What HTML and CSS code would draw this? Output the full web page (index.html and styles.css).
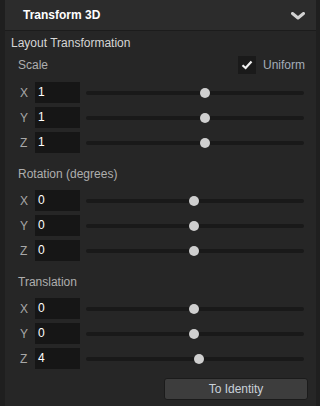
FILE: index.html
```html
<!DOCTYPE html>
<html lang="en">
<head>
  <meta charset="UTF-8" />
  <title>Transform 3D</title>
  <link rel="stylesheet" href="styles.css">
</head>
<body>
  <div class="panel">
    <div class="panel-header">
      <span class="panel-title">Transform 3D</span>
      <svg class="chevron" width="14" height="8" viewBox="0 0 14 8">
        <polyline points="1.5,1.5 7,6 12.5,1.5" fill="none" stroke="#d2d2d2" stroke-width="3" stroke-linejoin="round" stroke-linecap="round"/>
      </svg>
    </div>

    <div class="panel-body">
      <div class="group-title">Layout Transformation</div>

      <div class="section-head scale-head">
        <span class="section-title">Scale</span>
        <label class="check">
          <span class="check-box">
            <svg width="12" height="10" viewBox="0 0 12 10">
              <polyline points="1.5,5.2 4.6,8 10.5,1.5" fill="none" stroke="#f0f0f0" stroke-width="2.2"/>
            </svg>
          </span>
          Uniform
        </label>
      </div>
      <div class="rows">
        <div class="row"><span class="axis">X</span><div class="field">1</div><div class="slider"><div class="knob" style="left: 54.6%"></div></div></div>
        <div class="row"><span class="axis">Y</span><div class="field">1</div><div class="slider"><div class="knob" style="left: 54.6%"></div></div></div>
        <div class="row"><span class="axis">Z</span><div class="field">1</div><div class="slider"><div class="knob" style="left: 54.6%"></div></div></div>
      </div>

      <div class="section-head">
        <span class="section-title">Rotation (degrees)</span>
      </div>
      <div class="rows">
        <div class="row"><span class="axis">X</span><div class="field">0</div><div class="slider"><div class="knob" style="left: 49.5%"></div></div></div>
        <div class="row"><span class="axis">Y</span><div class="field">0</div><div class="slider"><div class="knob" style="left: 49.5%"></div></div></div>
        <div class="row"><span class="axis">Z</span><div class="field">0</div><div class="slider"><div class="knob" style="left: 49.5%"></div></div></div>
      </div>

      <div class="section-head">
        <span class="section-title">Translation</span>
      </div>
      <div class="rows">
        <div class="row"><span class="axis">X</span><div class="field">0</div><div class="slider"><div class="knob" style="left: 49.5%"></div></div></div>
        <div class="row"><span class="axis">Y</span><div class="field">0</div><div class="slider"><div class="knob" style="left: 49.5%"></div></div></div>
        <div class="row"><span class="axis">Z</span><div class="field">4</div><div class="slider"><div class="knob" style="left: 51.8%"></div></div></div>
      </div>

      <div class="actions">
        <button class="btn">To Identity</button>
      </div>
    </div>
  </div>
</body>
</html>
```

FILE: styles.css
```css
body {
  margin: 0;
  background-color: #1f1f1f;
  font-family: "Liberation Sans", Arial, sans-serif;
  font-size: 12px;
  color: #d4d4d4;
}

.panel {
  width: 311px;
  height: 406px;
  margin-left: 5px;
  background-color: #262626;
}

.panel-header {
  display: flex;
  align-items: center;
  justify-content: space-between;
  height: 30px;
  padding: 0 11px 0 18px;
  background-color: #2c2c2c;
  border-bottom: 1px solid #1c1c1c;
}

.panel-title {
  font-weight: bold;
  color: #ffffff;
  font-size: 12px;
}

.chevron {
  margin-top: 1px;
}

.panel-body {
  padding: 2px 8px 0 6px;
}

.group-title {
  height: 20px;
  line-height: 20px;
  color: #d6d6d6;
}

.section-head {
  display: flex;
  align-items: center;
  justify-content: space-between;
  height: 20px;
  margin: 11px 3px 6px 7px;
}

.scale-head {
  margin-top: 2px;
  margin-bottom: 7px;
}

.section-title {
  color: #aeaeae;
}

.check {
  display: flex;
  align-items: center;
  gap: 7px;
  color: #a4adb8;
}

.check-box {
  display: flex;
  align-items: center;
  justify-content: center;
  width: 18px;
  height: 18px;
  background-color: #1a1a1a;
}

.rows {
  display: flex;
  flex-direction: column;
  gap: 4px;
}

.row {
  display: flex;
  align-items: center;
  height: 21px;
}

.axis {
  width: 15px;
  padding-left: 9px;
  color: #a8a8a8;
}

.field {
  width: 42px;
  height: 21px;
  line-height: 21px;
  padding-left: 3px;
  background-color: #161616;
  color: #ffffff;
}

.slider {
  position: relative;
  flex: 1;
  height: 4px;
  margin: 0 4px 0 6px;
  border-radius: 2px;
  background-color: #191919;
}

.knob {
  position: absolute;
  top: -3px;
  width: 10px;
  height: 10px;
  margin-left: -5px;
  border-radius: 50%;
  background-color: #cfcfcf;
}

.actions {
  display: flex;
  justify-content: flex-end;
  margin-top: 9px;
}

.btn {
  width: 144px;
  height: 22px;
  padding: 0;
  font-family: inherit;
  font-size: 12px;
  color: #c9d1d9;
  background-color: #3d3d3d;
  border: 1px solid #1b1b1b;
  border-radius: 3px;
}
```
